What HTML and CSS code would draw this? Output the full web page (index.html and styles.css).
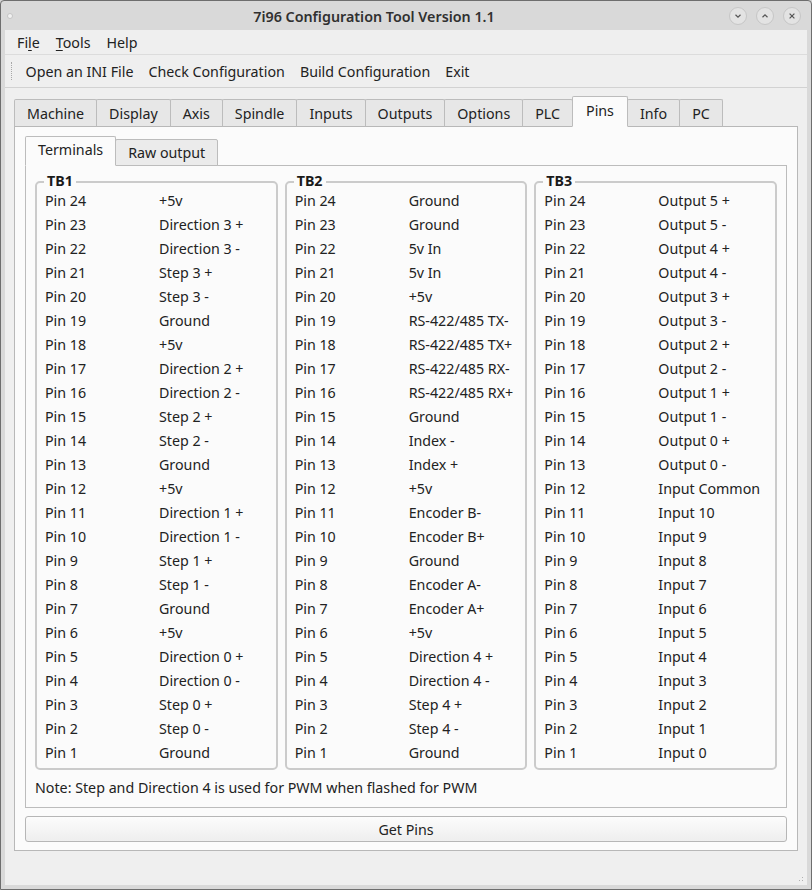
FILE: index.html
```html
<!DOCTYPE html>
<html>
<head>
<meta charset="utf-8">
<title>7i96 Configuration Tool</title>
<link rel="stylesheet" href="styles.css">
</head>
<body>
<div class="window">
  <div class="titlebar">
    <span class="win-dot"></span>
    <div class="title">7i96 Configuration Tool Version 1.1</div>
    <div class="win-btns">
      <span class="win-btn"><svg width="10" height="10" viewBox="0 0 10 10"><path d="M2.5 3.8 L5 6.2 L7.5 3.8" fill="none" stroke="#555" stroke-width="1.2"/></svg></span>
      <span class="win-btn"><svg width="10" height="10" viewBox="0 0 10 10"><path d="M2.5 6.2 L5 3.8 L7.5 6.2" fill="none" stroke="#555" stroke-width="1.2"/></svg></span>
      <span class="win-btn"><svg width="10" height="10" viewBox="0 0 10 10"><path d="M2.6 2.6 L7.4 7.4 M7.4 2.6 L2.6 7.4" fill="none" stroke="#555" stroke-width="1.2"/></svg></span>
    </div>
  </div>
  <div class="client">
    <div class="menubar">
      <span class="menu">Fi<u>l</u>e</span>
      <span class="menu"><u>T</u>ools</span>
      <span class="menu">Help</span>
    </div>
    <div class="toolbar">
      <span class="grip"></span>
      <span class="tool">Open an INI File</span>
      <span class="tool">Check Configuration</span>
      <span class="tool">Build Configuration</span>
      <span class="tool">Exit</span>
    </div>
    <div class="main">
      <div class="tabs">
        <span class="tab">Machine</span>
        <span class="tab">Display</span>
        <span class="tab">Axis</span>
        <span class="tab">Spindle</span>
        <span class="tab">Inputs</span>
        <span class="tab">Outputs</span>
        <span class="tab">Options</span>
        <span class="tab">PLC</span>
        <span class="tab active">Pins</span>
        <span class="tab">Info</span>
        <span class="tab">PC</span>
      </div>
      <div class="panel">
        <div class="subtabs">
          <span class="subtab active">Terminals</span>
          <span class="subtab">Raw output</span>
        </div>
        <div class="subpanel">
          <div class="groups">
            <div class="group">
              <span class="group-title">TB1</span>
              <div class="pins">
                <span>Pin 24</span><span>+5v</span>
                <span>Pin 23</span><span>Direction 3 +</span>
                <span>Pin 22</span><span>Direction 3 -</span>
                <span>Pin 21</span><span>Step 3 +</span>
                <span>Pin 20</span><span>Step 3 -</span>
                <span>Pin 19</span><span>Ground</span>
                <span>Pin 18</span><span>+5v</span>
                <span>Pin 17</span><span>Direction 2 +</span>
                <span>Pin 16</span><span>Direction 2 -</span>
                <span>Pin 15</span><span>Step 2 +</span>
                <span>Pin 14</span><span>Step 2 -</span>
                <span>Pin 13</span><span>Ground</span>
                <span>Pin 12</span><span>+5v</span>
                <span>Pin 11</span><span>Direction 1 +</span>
                <span>Pin 10</span><span>Direction 1 -</span>
                <span>Pin 9</span><span>Step 1 +</span>
                <span>Pin 8</span><span>Step 1 -</span>
                <span>Pin 7</span><span>Ground</span>
                <span>Pin 6</span><span>+5v</span>
                <span>Pin 5</span><span>Direction 0 +</span>
                <span>Pin 4</span><span>Direction 0 -</span>
                <span>Pin 3</span><span>Step 0 +</span>
                <span>Pin 2</span><span>Step 0 -</span>
                <span>Pin 1</span><span>Ground</span>
              </div>
            </div>
            <div class="group">
              <span class="group-title">TB2</span>
              <div class="pins">
                <span>Pin 24</span><span>Ground</span>
                <span>Pin 23</span><span>Ground</span>
                <span>Pin 22</span><span>5v In</span>
                <span>Pin 21</span><span>5v In</span>
                <span>Pin 20</span><span>+5v</span>
                <span>Pin 19</span><span>RS-422/485 TX-</span>
                <span>Pin 18</span><span>RS-422/485 TX+</span>
                <span>Pin 17</span><span>RS-422/485 RX-</span>
                <span>Pin 16</span><span>RS-422/485 RX+</span>
                <span>Pin 15</span><span>Ground</span>
                <span>Pin 14</span><span>Index -</span>
                <span>Pin 13</span><span>Index +</span>
                <span>Pin 12</span><span>+5v</span>
                <span>Pin 11</span><span>Encoder B-</span>
                <span>Pin 10</span><span>Encoder B+</span>
                <span>Pin 9</span><span>Ground</span>
                <span>Pin 8</span><span>Encoder A-</span>
                <span>Pin 7</span><span>Encoder A+</span>
                <span>Pin 6</span><span>+5v</span>
                <span>Pin 5</span><span>Direction 4 +</span>
                <span>Pin 4</span><span>Direction 4 -</span>
                <span>Pin 3</span><span>Step 4 +</span>
                <span>Pin 2</span><span>Step 4 -</span>
                <span>Pin 1</span><span>Ground</span>
              </div>
            </div>
            <div class="group">
              <span class="group-title">TB3</span>
              <div class="pins">
                <span>Pin 24</span><span>Output 5 +</span>
                <span>Pin 23</span><span>Output 5 -</span>
                <span>Pin 22</span><span>Output 4 +</span>
                <span>Pin 21</span><span>Output 4 -</span>
                <span>Pin 20</span><span>Output 3 +</span>
                <span>Pin 19</span><span>Output 3 -</span>
                <span>Pin 18</span><span>Output 2 +</span>
                <span>Pin 17</span><span>Output 2 -</span>
                <span>Pin 16</span><span>Output 1 +</span>
                <span>Pin 15</span><span>Output 1 -</span>
                <span>Pin 14</span><span>Output 0 +</span>
                <span>Pin 13</span><span>Output 0 -</span>
                <span>Pin 12</span><span>Input Common</span>
                <span>Pin 11</span><span>Input 10</span>
                <span>Pin 10</span><span>Input 9</span>
                <span>Pin 9</span><span>Input 8</span>
                <span>Pin 8</span><span>Input 7</span>
                <span>Pin 7</span><span>Input 6</span>
                <span>Pin 6</span><span>Input 5</span>
                <span>Pin 5</span><span>Input 4</span>
                <span>Pin 4</span><span>Input 3</span>
                <span>Pin 3</span><span>Input 2</span>
                <span>Pin 2</span><span>Input 1</span>
                <span>Pin 1</span><span>Input 0</span>
              </div>
            </div>
          </div>
          <div class="note">Note: Step and Direction 4 is used for PWM when flashed for PWM</div>
        </div>
        <button class="getpins">Get Pins</button>
      </div>
    </div>
    <div class="statusbar"><span class="sizegrip"></span></div>
  </div>
</div>
</body>
</html>
```

FILE: styles.css
```css
* { box-sizing: border-box; }
html, body { margin: 0; padding: 0; }
body {
  width: 812px;
  height: 890px;
  font-family: "Noto Sans", sans-serif;
  font-size: 14.25px;
  color: #222;
  background: #d6d6d6;
}
.window {
  width: 812px;
  height: 890px;
  border: 1px solid #6e6e6e;
  border-radius: 4px 4px 0 0;
  background: #d9d9d9;
  padding: 0 4px 4px 4px;
  display: flex;
  flex-direction: column;
}
.titlebar {
  height: 29px;
  display: flex;
  align-items: center;
  margin: 0 -4px;
}
.win-dot {
  width: 6px;
  height: 6px;
  border-radius: 50%;
  background: #f2f2f2;
  border: 1px solid #c4c4c4;
  margin-left: 6px;
}
.title {
  flex: 1;
  text-align: center;
  font-size: 14.3px;
  font-weight: 600;
  color: #303030;
  padding-left: 16px;
  padding-top: 2px;
}
.win-btns {
  display: flex;
  gap: 9px;
  padding-right: 10px;
  padding-left: 10px;
}
.win-btn {
  width: 18px;
  height: 18px;
  border-radius: 50%;
  border: 1px solid #c6c6c6;
  background: #e3e3e3;
  display: flex;
  align-items: center;
  justify-content: center;
}
.client {
  flex: 1;
  background: #efefef;
  display: flex;
  flex-direction: column;
}
.menubar {
  height: 25px;
  border-bottom: 1px solid #dcdcdc;
  display: flex;
  align-items: center;
  padding-left: 4px;
}
.menu {
  padding: 0 8px;
  color: #222;
}
.menu u { text-decoration-thickness: 1px; text-underline-offset: 2px; }
.toolbar {
  height: 33px;
  border-bottom: 1px solid #d2d2d2;
  display: flex;
  align-items: center;
  padding-left: 6px;
}
.grip {
  width: 1px;
  height: 18px;
  border-left: 1px dotted #a8a8a8;
  margin-right: 6px;
}
.tool {
  padding: 0 7.5px;
}
.main {
  padding: 9px 9px 0 9px;
}
.tabs {
  display: flex;
  align-items: flex-end;
  height: 30px;
  margin-bottom: -1px;
  position: relative;
  z-index: 1;
}
.tab {
  height: 28px;
  border: 1px solid #bcbcbc;
  border-bottom: 1px solid #b8b8b8;
  border-radius: 2px 2px 0 0;
  background: #e7e7e7;
  padding: 0 12px;
  margin-right: -1px;
  display: flex;
  align-items: center;
  color: #222;
}
.tab.active {
  height: 31px;
  background: #fbfbfb;
  border-bottom-color: #fbfbfb;
  padding: 0 13px 2px 13px;
  position: relative;
  z-index: 2;
}
.panel {
  border: 1px solid #b8b8b8;
  background: #fbfbfb;
  padding: 10px 10px 8px 10px;
  height: 725px;
}
.subtabs {
  display: flex;
  align-items: flex-end;
  height: 29px;
  margin-bottom: -1px;
  position: relative;
  z-index: 1;
}
.subtab {
  height: 27px;
  border: 1px solid #bcbcbc;
  border-radius: 2px 2px 0 0;
  background: #ebebeb;
  padding: 0 12px;
  margin-right: -1px;
  display: flex;
  align-items: center;
}
.subtab.active {
  height: 30px;
  background: #fbfbfb;
  border-bottom-color: #fbfbfb;
  padding-bottom: 3px;
  position: relative;
  z-index: 2;
}
.subpanel {
  border: 1px solid #bcbcbc;
  background: #fbfbfb;
  padding: 15px 9px 0 9px;
}
.groups {
  display: grid;
  grid-template-columns: 1fr 1fr 1fr;
  gap: 7px;
}
.group {
  position: relative;
  border: 2px solid #cbcbcb;
  border-radius: 5px;
  padding: 5px 8px 4px 8px;
}
.group-title {
  position: absolute;
  top: -11px;
  left: 7px;
  padding: 0 3px;
  background: #fbfbfb;
  font-weight: bold;
  line-height: 18px;
  color: #1a1a1a;
}
.pins {
  display: grid;
  grid-template-columns: 114px 1fr;
  grid-auto-rows: 24px;
  align-items: center;
  white-space: nowrap;
}
.note {
  margin-top: 8px;
  height: 20px;
  line-height: 20px;
  margin-bottom: 9px;
}
.getpins {
  display: block;
  width: 100%;
  height: 26px;
  margin-top: 8px;
  border: 1px solid #b6b6b6;
  border-radius: 3px;
  background: linear-gradient(#fcfcfc, #eeeeee);
  font-family: "Noto Sans", sans-serif;
  font-size: 14.25px;
  color: #222;
  padding: 0;
}
.statusbar {
  flex: 1;
  position: relative;
}
.sizegrip {
  position: absolute;
  right: 2px;
  bottom: 2px;
  width: 10px;
  height: 10px;
  background-image: radial-gradient(circle, #b0b0b0 0.7px, transparent 0.8px);
  background-size: 3px 3px;
  clip-path: polygon(100% 0, 100% 100%, 0 100%);
}
```
